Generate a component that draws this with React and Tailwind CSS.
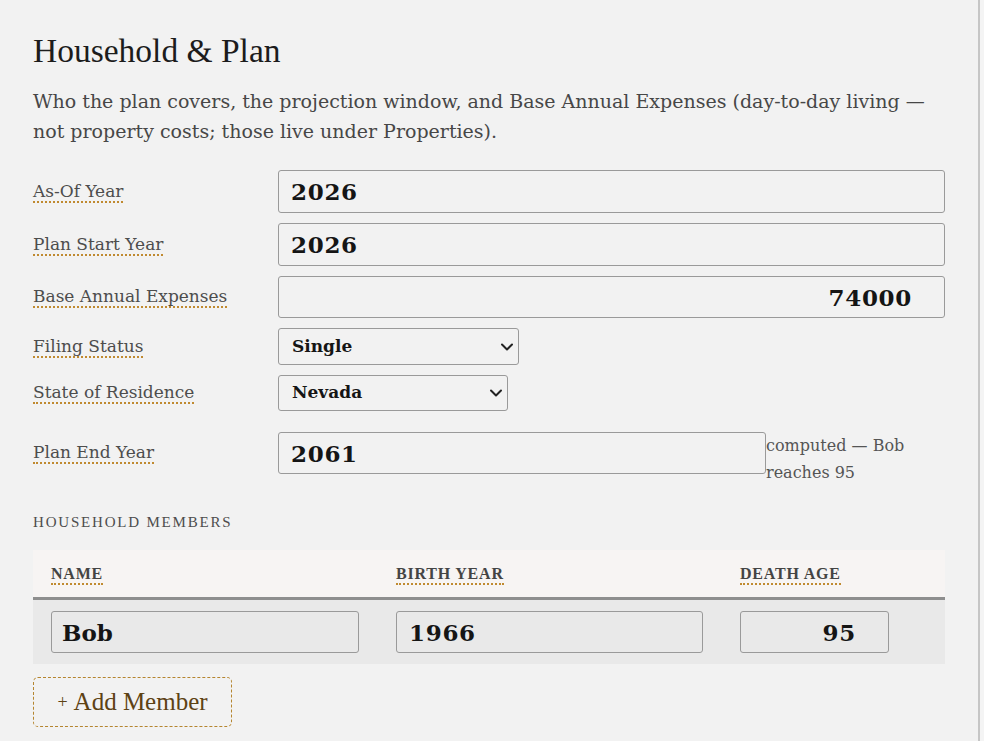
import { ChevronDown } from "lucide-react";

const body = "font-['DejaVu_Serif',serif]";
const display = "font-['Liberation_Serif',serif]";

function Label({ children }) {
  return (
    <span className="inline-block justify-self-start border-b-2 border-dotted border-[#c08a30] leading-[20px] text-[17px] text-[#4d4d4d]">
      {children}
    </span>
  );
}

function TextBox({ value, right = false, className = "" }) {
  return (
    <input
      defaultValue={value}
      className={`rounded-[3px] border border-[#9a9a9a] bg-transparent text-[23px] font-bold tracking-[0.03em] text-[#151515] outline-none ${
        right ? "text-right pr-8" : "pl-3"
      } ${className}`}
    />
  );
}

function Select({ value, options, width }) {
  return (
    <div className={`relative ${width}`}>
      <select
        defaultValue={value}
        className="h-full w-full appearance-none rounded-[3px] border border-[#9a9a9a] bg-transparent pl-[13px] text-[17px] font-bold text-[#151515] outline-none"
      >
        {options.map((o) => (
          <option key={o}>{o}</option>
        ))}
      </select>
      <ChevronDown className="pointer-events-none absolute right-[2px] top-1/2 h-[20px] w-[20px] -translate-y-1/2 text-[#222]" strokeWidth={2.4} />
    </div>
  );
}

export default function App() {
  return (
    <div className={`flex min-h-screen bg-[#f2f2f2] ${body}`}>
      <div className="w-[980px] shrink-0 border-r-2 border-[#c6c6c6] px-[33px] pt-[33px] pb-4">
        <h1 className={`${display} text-[33.5px] leading-[36px] text-[#1c1c1c]`}>Household &amp; Plan</h1>
        <p className="mt-[17px] text-[19px] leading-[30px] text-[#474747]">
          Who the plan covers, the projection window, and Base Annual Expenses (day-to-day living —
          not property costs; those live under Properties).
        </p>

        <div className="mt-[24px] grid grid-cols-[245px_1fr] items-center gap-y-[10px]">
          <Label>As-Of Year</Label>
          <TextBox value="2026" className="h-[43px] w-full" />

          <Label>Plan Start Year</Label>
          <TextBox value="2026" className="h-[43px] w-full" />

          <Label>Base Annual Expenses</Label>
          <TextBox value="74000" right className="h-[42px] w-full" />

          <Label>Filing Status</Label>
          <div className="flex h-[37px]">
            <Select value="Single" options={["Single", "Married Filing Jointly"]} width="w-[241px]" />
          </div>

          <Label>State of Residence</Label>
          <div className="flex h-[36px]">
            <Select value="Nevada" options={["Nevada", "California", "Texas"]} width="w-[230px]" />
          </div>

          <div className="mt-[11px] flex h-[42px] items-center self-start">
            <Label>Plan End Year</Label>
          </div>
          <div className="mt-[11px] flex items-start">
            <TextBox value="2061" className="h-[42px] min-w-0 flex-1" />
            <span className="w-[179px] text-[16px] leading-[27px] text-[#555]">computed — Bob reaches 95</span>
          </div>
        </div>

        <div className={`${display} mt-[27px] text-[15px] uppercase leading-[18px] tracking-[0.12em] text-[#4d4d4d]`}>
          Household Members
        </div>

        <div className="mt-[19px]">
          <div className="grid h-[50px] grid-cols-[345px_344px_1fr] items-center border-b-[3px] border-[#8e8e8e] bg-[#f7f4f3]">
            {["Name", "Birth Year", "Death Age"].map((h) => (
              <div key={h} className="pl-[18px]">
                <span className={`${display} inline-block border-b-2 border-dotted border-[#c08a30] text-[16px] font-bold uppercase leading-[19px] tracking-[0.05em] text-[#444]`}>
                  {h}
                </span>
              </div>
            ))}
          </div>
          <div className="grid h-[64px] grid-cols-[345px_344px_1fr] items-center bg-[#e9e9e9]">
            <div className="pl-[18px]">
              <TextBox value="Bob" className="h-[42px] w-[308px] !tracking-normal !pl-[10px]" />
            </div>
            <div className="pl-[18px]">
              <TextBox value="1966" className="h-[42px] w-[307px]" />
            </div>
            <div className="pl-[18px]">
              <TextBox value="95" right className="h-[42px] w-[149px]" />
            </div>
          </div>
        </div>

        <button className={`${display} mt-[13px] flex h-[50px] w-[199px] items-center justify-center rounded-[5px] border border-dashed border-[#b5852f] text-[25px] text-[#5e4214]`}>
          <span className="mr-[6px] text-[18px]">+</span>Add Member
        </button>
      </div>
      <div className="flex-1 bg-[#f4f4f4]" />
    </div>
  );
}
